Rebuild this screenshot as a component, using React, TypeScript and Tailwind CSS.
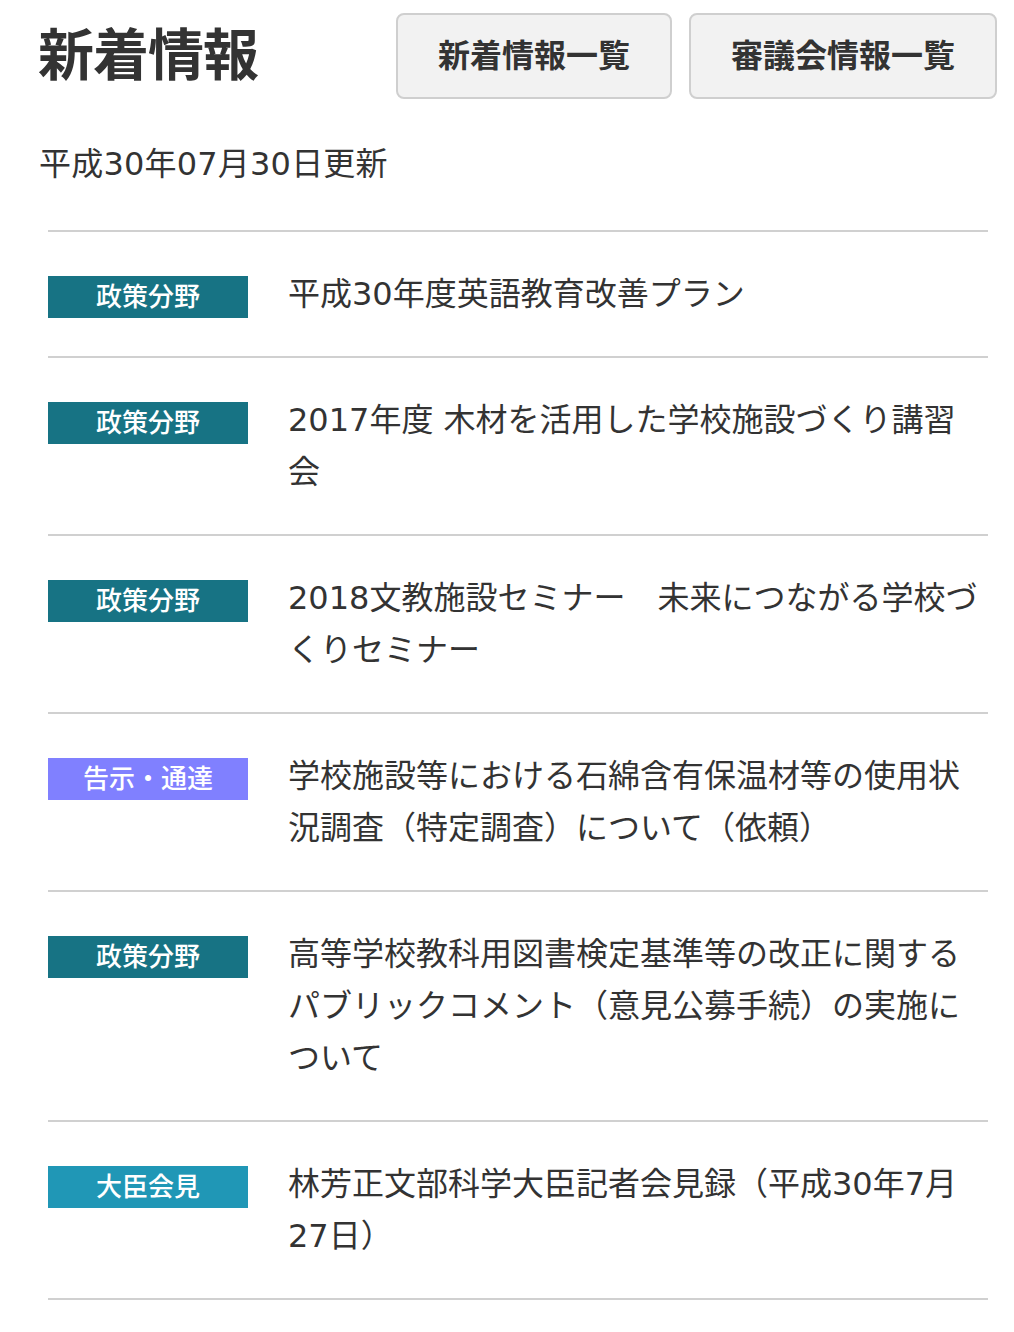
import React from 'react';

type Tag = 'policy' | 'notice' | 'minister';

type NewsItem = {
  tag: Tag;
  title: string;
};

const TAGS: Record<Tag, { label: string; className: string }> = {
  policy: { label: '政策分野', className: 'bg-[#177384]' },
  notice: { label: '告示・通達', className: 'bg-[#8080ff]' },
  minister: { label: '大臣会見', className: 'bg-[#2097b6]' },
};

const items: NewsItem[] = [
  { tag: 'policy', title: '平成30年度英語教育改善プラン' },
  { tag: 'policy', title: '2017年度 木材を活用した学校施設づくり講習会' },
  { tag: 'policy', title: '2018文教施設セミナー　未来につながる学校づくりセミナー' },
  { tag: 'notice', title: '学校施設等における石綿含有保温材等の使用状況調査（特定調査）について（依頼）' },
  { tag: 'policy', title: '高等学校教科用図書検定基準等の改正に関するパブリックコメント（意見公募手続）の実施について' },
  { tag: 'minister', title: '林芳正文部科学大臣記者会見録（平成30年7月27日）' },
];

export default function App() {
  return (
    <div className="min-h-[1332px] bg-white text-[#333] font-['DejaVu_Sans','Noto_Sans_CJK_JP',sans-serif]">
      <div className="flex items-center pt-[13px] pl-[38px] pr-[17px]">
        <h1 className="text-[56px] leading-[56px] font-bold tracking-[-1px]">新着情報</h1>
        <div className="ml-auto flex gap-[17px]">
          <a
            href="#"
            className="block rounded-lg border-2 border-[#cfcfcf] bg-[#f2f2f2] px-[40px] py-[25px] text-[32px] leading-[32px] font-bold text-[#333]"
          >
            新着情報一覧
          </a>
          <a
            href="#"
            className="block rounded-lg border-2 border-[#cfcfcf] bg-[#f2f2f2] px-[40px] py-[25px] text-[32px] leading-[32px] font-bold text-[#333]"
          >
            審議会情報一覧
          </a>
        </div>
      </div>

      <p className="mt-[41px] pl-[39px] text-[32px] leading-[48px] tracking-[0.2px]">平成30年07月30日更新</p>

      <ul className="mx-[48px] mt-[42px] w-[940px] border-t-2 border-[#d0d0d0]">
        {items.map((item, index) => {
          const tag = TAGS[item.tag];
          return (
            <li key={index} className="flex gap-[40px] border-b-2 border-[#d0d0d0] py-[36px]">
              <span
                className={`mt-[8px] flex h-[42px] w-[200px] shrink-0 items-center justify-center text-[26px] font-medium text-white ${tag.className}`}
              >
                {tag.label}
              </span>
              <a href="#" className="block w-[694px] text-[32px] leading-[52px] text-[#333]">
                {item.title}
              </a>
            </li>
          );
        })}
      </ul>
    </div>
  );
}
